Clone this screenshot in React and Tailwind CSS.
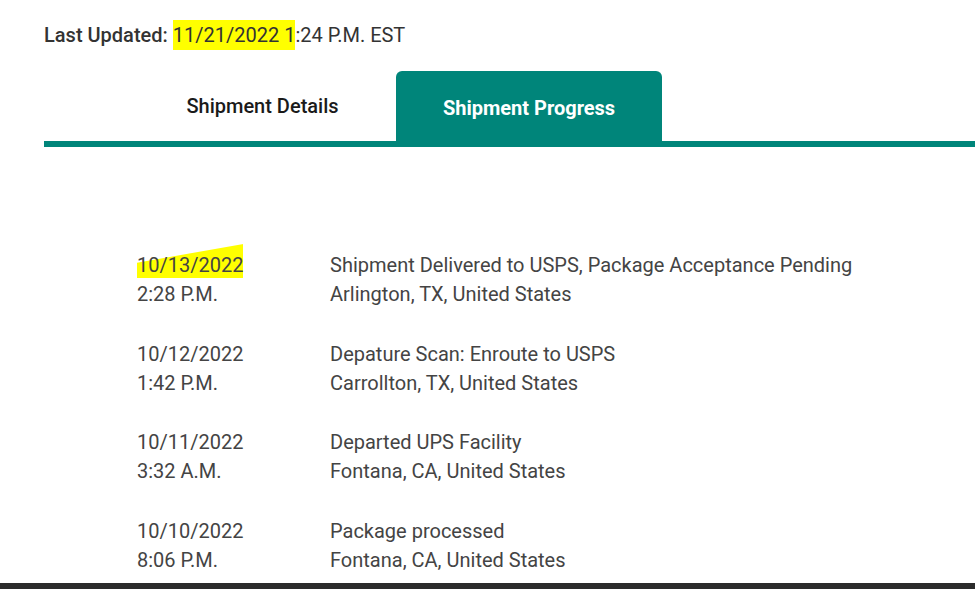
import React from 'react'

const events = [
  { date: '10/13/2022', time: '2:28 P.M.', title: 'Shipment Delivered to USPS, Package Acceptance Pending', place: 'Arlington, TX, United States', mark: true },
  { date: '10/12/2022', time: '1:42 P.M.', title: 'Depature Scan: Enroute to USPS', place: 'Carrollton, TX, United States' },
  { date: '10/11/2022', time: '3:32 A.M.', title: 'Departed UPS Facility', place: 'Fontana, CA, United States' },
  { date: '10/10/2022', time: '8:06 P.M.', title: 'Package processed', place: 'Fontana, CA, United States' },
]

export default function App() {
  return (
    <div className="h-[589px] w-[975px] overflow-hidden bg-white flex flex-col font-['Roboto',_'Liberation_Sans',_sans-serif]">
      <div className="flex-1 pl-[44px]">
        {/* header */}
        <div className="pt-[21px] h-[71px] text-[20px] leading-[28px] text-[#333]">
          <span className="font-medium">Last Updated: </span>
          <span className="bg-[#ffff00] py-[3px]">11/21/2022 1</span>
          <span>:24 P.M. EST</span>
        </div>

        {/* tabs */}
        <div className="flex pl-[85px] h-[70px]">
          <div className="w-[267px] flex items-center justify-center text-[20px] font-medium text-[#1a1a1a]">
            Shipment Details
          </div>
          <div className="w-[266px] flex items-center justify-center rounded-t-[6px] bg-[#00857a] text-[20px] font-bold text-white pt-[4px]">
            Shipment Progress
          </div>
        </div>
        <div className="h-[6px] bg-[#00857a]" />

        {/* progress list */}
        <div className="pt-[104px] pl-[93px] flex flex-col gap-[30.5px] text-[20px] leading-[29px] text-[#444]">
          {events.map((ev, i) => (
            <div key={i} className="flex">
              <div className="w-[193px] shrink-0">
                <div className="relative inline-block">
                  {ev.mark && (
                    <div className="absolute left-0 right-0 top-[-7px] bottom-[2px] bg-[#ffff00] [clip-path:polygon(0_55%,_100%_0,_100%_100%,_0_100%)]" />
                  )}
                  <span className="relative">{ev.date}</span>
                </div>
                <div>{ev.time}</div>
              </div>
              <div>
                <div>{ev.title}</div>
                <div>{ev.place}</div>
              </div>
            </div>
          ))}
        </div>
      </div>
      <div className="h-[6px] bg-[#2b2b2b]" />
    </div>
  )
}
